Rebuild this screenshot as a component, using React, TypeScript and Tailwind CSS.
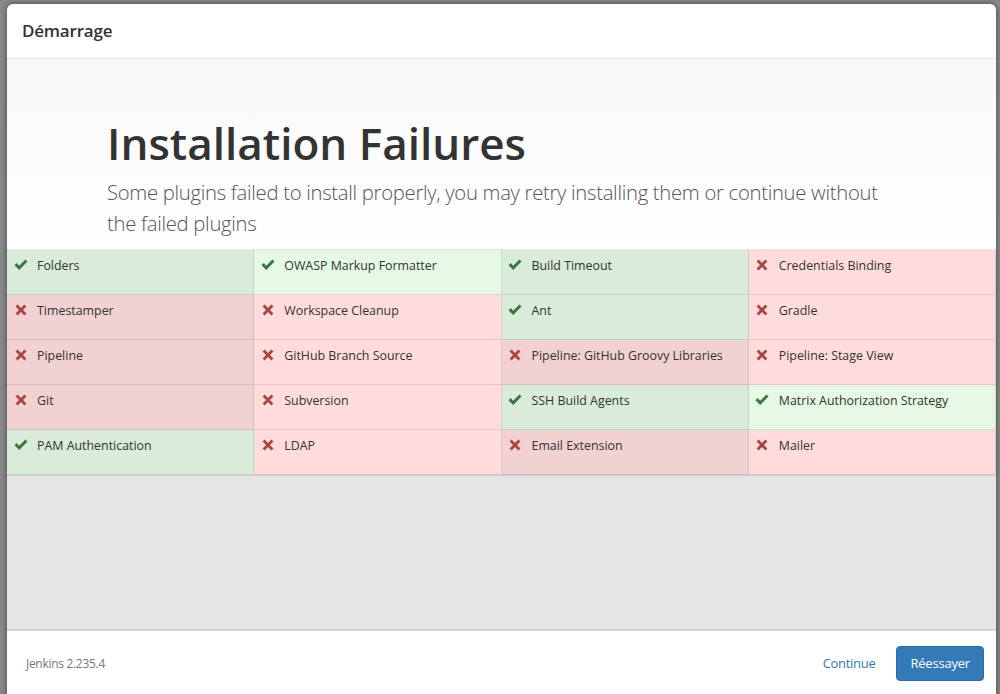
import React from 'react';

type Plugin = { name: string; ok: boolean };

const plugins: Plugin[] = [
  { name: 'Folders', ok: true },
  { name: 'OWASP Markup Formatter', ok: true },
  { name: 'Build Timeout', ok: true },
  { name: 'Credentials Binding', ok: false },
  { name: 'Timestamper', ok: false },
  { name: 'Workspace Cleanup', ok: false },
  { name: 'Ant', ok: true },
  { name: 'Gradle', ok: false },
  { name: 'Pipeline', ok: false },
  { name: 'GitHub Branch Source', ok: false },
  { name: 'Pipeline: GitHub Groovy Libraries', ok: false },
  { name: 'Pipeline: Stage View', ok: false },
  { name: 'Git', ok: false },
  { name: 'Subversion', ok: false },
  { name: 'SSH Build Agents', ok: true },
  { name: 'Matrix Authorization Strategy', ok: true },
  { name: 'PAM Authentication', ok: true },
  { name: 'LDAP', ok: false },
  { name: 'Email Extension', ok: false },
  { name: 'Mailer', ok: false },
];

function CheckIcon() {
  return (
    <svg width="14" height="12" viewBox="0 0 14 12" className="shrink-0">
      <path d="M0.5 6.2 L2.6 4.1 L5.2 6.7 L11.4 0.5 L13.5 2.6 L5.2 10.9 Z" fill="#3c763d" />
    </svg>
  );
}

function CrossIcon() {
  return (
    <svg width="12" height="12" viewBox="0 0 12 12" className="shrink-0">
      <path
        d="M0.6 2.6 L2.6 0.6 L6 4 L9.4 0.6 L11.4 2.6 L8 6 L11.4 9.4 L9.4 11.4 L6 8 L2.6 11.4 L0.6 9.4 L4 6 Z"
        fill="#a94442"
      />
    </svg>
  );
}

function PluginCell({ plugin, index }: { plugin: Plugin; index: number }) {
  const dark = index % 2 === 0;
  const bg = plugin.ok
    ? dark
      ? 'bg-[#d9ebd9]'
      : 'bg-[#e4f8e4]'
    : dark
      ? 'bg-[#f2d1d2]'
      : 'bg-[#ffdcdc]';
  return (
    <div className={`h-[45px] border-r border-b border-black/10 px-[6px] pt-[8px] flex items-start gap-[10px] ${bg}`}>
      <div className="w-[14px] flex justify-center pt-[1px] pl-[1px]">
        {plugin.ok ? <CheckIcon /> : <CrossIcon />}
      </div>
      <span className="text-[12.4px] leading-[16px] text-[#333]">{plugin.name}</span>
    </div>
  );
}

export default function App() {
  return (
    <div
      className="h-[694px] w-[1000px] bg-[#8a8a8a] pt-[4px] pl-[7px] pr-[4px] overflow-hidden"
      style={{ fontFamily: '"Open Sans", "Noto Sans", sans-serif' }}
    >
      <div className="h-[700px] bg-white rounded-t-[6px] flex flex-col shadow-[0_0_6px_rgba(0,0,0,0.5)]">
        <div className="h-[55px] shrink-0 border-b border-[#e5e5e5] px-[15px] flex items-center">
          <h4 className="text-[17px] font-semibold text-[#333] tracking-[-0.2px]">Démarrage</h4>
        </div>

        <div className="h-[190px] shrink-0 bg-gradient-to-b from-[#f8f8f8] to-white pl-[100px] pt-[56px]">
          <h1 className="text-[44px] leading-[56px] font-semibold text-[#333]">
            Installation Failures
          </h1>
          <p className="mt-[6px] w-[790px] text-[20.3px] leading-[31px] font-light text-[#555] tracking-[-0.3px]">
            Some plugins failed to install properly, you may retry installing them or continue without
            the failed plugins
          </p>
        </div>

        <div className="grid grid-cols-4 border-t border-black/10 shrink-0">
          {plugins.map((p, i) => (
            <PluginCell key={p.name} plugin={p} index={i} />
          ))}
        </div>

        <div className="h-[156px] shrink-0 bg-[#e5e5e5] border-t border-black/10 border-b-2 border-b-[#d2d2d2]" />

        <div className="h-[62px] shrink-0 flex items-center pl-[19px] pr-[12px] pt-[3px]">
          <span className="text-[12px] text-[#777] tracking-[-0.3px]">Jenkins 2.235.4</span>
          <div className="ml-auto flex items-center gap-[21px]">
            <span className="text-[13px] text-[#337ab7] tracking-[-0.3px]">Continue</span>
            <button className="h-[35px] px-[13px] rounded-[4px] bg-[#337ab7] border border-[#2e6da4] text-white text-[13px] tracking-[-0.2px]">
              Réessayer
            </button>
          </div>
        </div>
      </div>
    </div>
  );
}
